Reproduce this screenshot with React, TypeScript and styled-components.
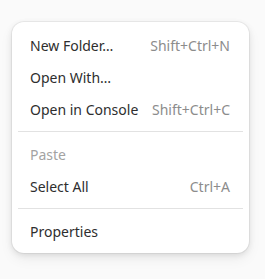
import React from "react";
import styled, { createGlobalStyle } from "styled-components";

const GlobalStyle = createGlobalStyle`
  html, body {
    margin: 0;
    padding: 0;
    background: #fafafa;
  }
  body {
    font-family: "Noto Sans", "Open Sans", sans-serif;
    -webkit-font-smoothing: antialiased;
  }
`;

const Page = styled.div`
  width: 265px;
  height: 279px;
  padding: 22px 0 0 12px;
  box-sizing: border-box;
`;

const Menu = styled.div`
  width: 237px;
  box-sizing: border-box;
  padding: 7px 6px 6px;
  background: #ffffff;
  border-radius: 12px;
  box-shadow: 0 0 0 1px rgba(0, 0, 0, 0.05), 0 2px 6px rgba(0, 0, 0, 0.1),
    0 6px 14px rgba(0, 0, 0, 0.06);
`;

const Item = styled.div<{ disabled?: boolean }>`
  display: flex;
  align-items: center;
  justify-content: space-between;
  height: 32px;
  padding: 0 13px 0 12px;
  font-size: 14px;
  color: ${(props) => (props.disabled ? "#a3a3a3" : "#2e2e2e")};
`;

const Accel = styled.span`
  color: #8c8c8c;
  font-size: 14px;
`;

const Separator = styled.div`
  height: 1px;
  background: #e2e2e2;
  margin: 6px 0;
`;

type Entry = { label: string; accel?: string; disabled?: boolean } | "sep";

const entries: Entry[] = [
  { label: "New Folder…", accel: "Shift+Ctrl+N" },
  { label: "Open With…" },
  { label: "Open in Console", accel: "Shift+Ctrl+C" },
  "sep",
  { label: "Paste", disabled: true },
  { label: "Select All", accel: "Ctrl+A" },
  "sep",
  { label: "Properties" },
];

const App = () => {
  return (
    <>
      <GlobalStyle />
      <Page>
        <Menu>
          {entries.map((e, i) =>
            e === "sep" ? (
              <Separator key={i} />
            ) : (
              <Item key={i} disabled={e.disabled}>
                <span>{e.label}</span>
                {e.accel && <Accel>{e.accel}</Accel>}
              </Item>
            )
          )}
        </Menu>
      </Page>
    </>
  );
};

export default App;
